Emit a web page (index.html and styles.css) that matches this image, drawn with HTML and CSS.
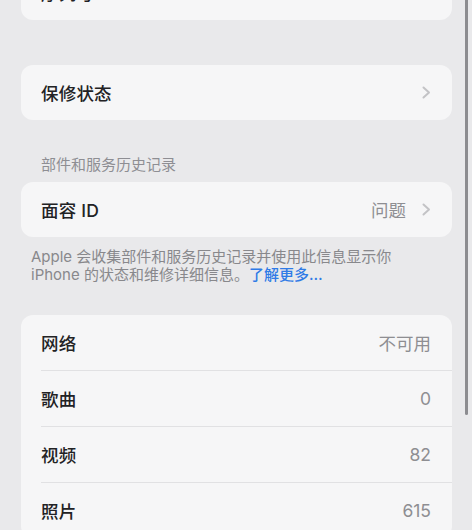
FILE: index.html
```html
<!DOCTYPE html>
<html lang="zh-CN">
<head>
<meta charset="utf-8">
<title>关于本机</title>
<link rel="stylesheet" href="styles.css">
</head>
<body>
<div class="page">
  <div class="card card-top">
    <div class="row">
      <span class="label">序列号</span>
      <span class="value">F2LXK9Q1N72D</span>
    </div>
  </div>

  <div class="card card-warranty">
    <div class="row">
      <span class="label">保修状态</span>
      <span class="trail">
        <svg class="chev" width="9" height="13" viewBox="0 0 9 13"><polyline points="1.5,1.5 7,6.5 1.5,11.5" fill="none" stroke="#c3c3c6" stroke-width="2" stroke-linecap="round" stroke-linejoin="round"/></svg>
      </span>
    </div>
  </div>

  <div class="section-header">部件和服务历史记录</div>
  <div class="card">
    <div class="row">
      <span class="label">面容 ID</span>
      <span class="trail">
        <span class="value">问题</span>
        <svg class="chev" width="9" height="13" viewBox="0 0 9 13"><polyline points="1.5,1.5 7,6.5 1.5,11.5" fill="none" stroke="#c3c3c6" stroke-width="2" stroke-linecap="round" stroke-linejoin="round"/></svg>
      </span>
    </div>
  </div>
  <p class="section-footer">Apple 会收集部件和服务历史记录并使用此信息显示你<br>iPhone 的状态和维修详细信息。<span class="link">了解更多…</span></p>

  <div class="card card-stats">
    <div class="row"><span class="label">网络</span><span class="value">不可用</span></div>
    <div class="row"><span class="label">歌曲</span><span class="value">0</span></div>
    <div class="row"><span class="label">视频</span><span class="value">82</span></div>
    <div class="row"><span class="label">照片</span><span class="value">615</span></div>
  </div>
</div>
<div class="scrollbar"></div>
</body>
</html>
```

FILE: styles.css
```css
html, body {
  margin: 0;
  padding: 0;
  height: 100%;
  overflow: hidden;
}
body {
  background: #e9e9eb;
  font-family: Inter, "Noto Sans CJK SC", "Noto Sans", sans-serif;
  color: #1c1c1e;
  position: relative;
}
.page {
  padding: 0 20px 0 21px;
}
.card {
  background: #f6f6f7;
  border-radius: 12px;
  overflow: hidden;
}
.card-top {
  margin-top: -35px;
}
.card-warranty {
  margin-top: 45px;
}
.row {
  height: 55px;
  display: flex;
  align-items: center;
  justify-content: space-between;
  padding: 0 21px 0 20px;
  box-sizing: border-box;
}
.card-stats .row + .row {
  height: 56px;
  border-top: 1px solid #e1e1e3;
  margin-left: 20px;
  padding-left: 0;
}
.label {
  font-size: 17.5px;
  font-weight: 500;
  color: #222224;
  letter-spacing: 0.2px;
}
.value {
  font-size: 17.5px;
  color: #8e8e92;
}
.trail {
  display: flex;
  align-items: center;
  gap: 16px;
}
.chev {
  display: block;
}
.section-header {
  margin: 36px 0 8px 20px;
  font-size: 15px;
  line-height: 18px;
  color: #8e8e93;
}
.section-footer {
  margin: 11px 0 0 10px;
  font-size: 15px;
  line-height: 18px;
  color: #88888c;
}
.link {
  color: #2f7be6;
  font-weight: 500;
}
.card-stats {
  margin-top: 31px;
}
.scrollbar {
  position: absolute;
  left: 465px;
  top: 0;
  width: 3px;
  height: 415px;
  border-radius: 0 0 2px 2px;
  background: #8c8c90;
}
```
